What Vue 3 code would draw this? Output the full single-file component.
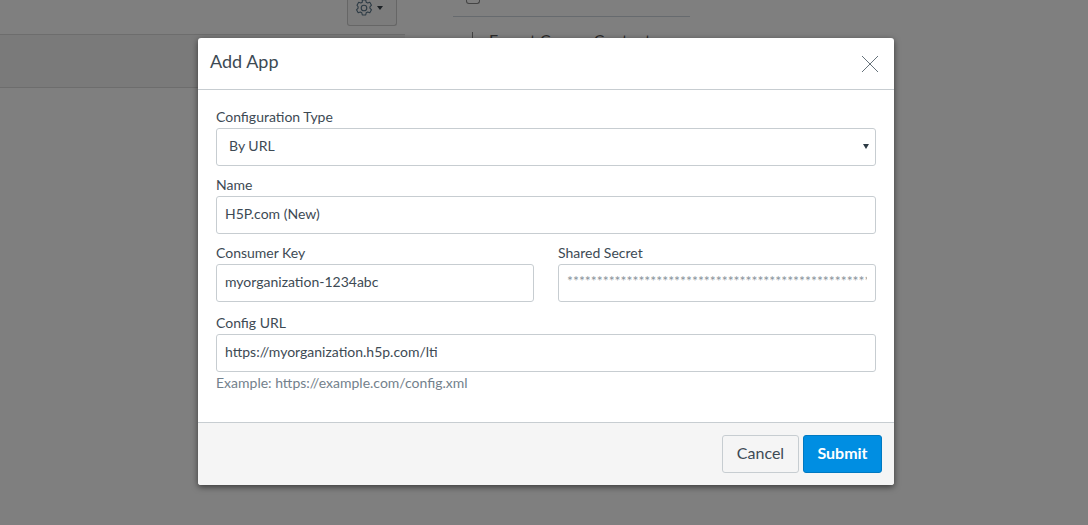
<script setup>
const secret = '*'.repeat(70)
</script>

<template>
  <div class="page">
    <div class="backdrop">
      <div class="left">
        <div class="toolbar">
          <button class="gear" type="button" aria-label="Settings">
            <svg width="18" height="18" viewBox="0 0 18 18" fill="none" stroke="#2d3b45" stroke-width="1.1" stroke-linejoin="round">
              <path d="M7.3 1h3.4l.5 2.2 1.5.8 2.1-.7 1.700 2.900-1.600 1.600v1.400l1.600 1.600-1.700 2.900-2.100-.7-1.500.8-.5 2.200H7.300l-.5-2.200-1.500-.8-2.100.7-1.700-2.900 1.600-1.600V7.800L2 6.200l1.700-2.900 2.100.7 1.500-.8z" />
              <circle cx="9" cy="9" r="2.800" />
            </svg>
            <span class="caret"></span>
          </button>
        </div>
        <div class="band"></div>
      </div>
      <div class="right">
        <div class="side-icon"></div>
        <div class="side-rule"></div>
        <div class="side-link"><span class="tick"></span>Export Course Content</div>
      </div>
    </div>

    <div class="overlay">
      <section class="modal">
        <header class="head">
          <h2>Add App</h2>
          <svg class="close" width="18" height="18" viewBox="0 0 18 18" stroke="#66727b" stroke-width="1" fill="none">
            <path d="M1 1l16 16M17 1L1 17" />
          </svg>
        </header>
        <form class="body">
          <label class="field">
            <span>Configuration Type</span>
            <div class="select">By URL<i class="arrow"></i></div>
          </label>
          <label class="field">
            <span>Name</span>
            <input value="H5P.com (New)" />
          </label>
          <div class="pair">
            <label class="field">
              <span>Consumer Key</span>
              <input value="myorganization-1234abc" />
            </label>
            <label class="field">
              <span>Shared Secret</span>
              <input class="secret" :value="secret" />
            </label>
          </div>
          <label class="field last">
            <span>Config URL</span>
            <input value="https://myorganization.h5p.com/lti" />
          </label>
          <p class="hint">Example: https://example.com/config.xml</p>
        </form>
        <footer class="foot">
          <button class="btn cancel" type="button">Cancel</button>
          <button class="btn primary" type="button">Submit</button>
        </footer>
      </section>
    </div>
  </div>
</template>

<style>
html, body { margin: 0; background: #7f7f7f; }
</style>

<style scoped>
.page {
  position: relative;
  width: 1088px;
  height: 525px;
  overflow: hidden;
  background: #7f7f7f;
  font-family: Lato, "Open Sans", sans-serif;
  font-size: 14px;
  color: #3d4a54;
}
.backdrop { display: flex; height: 100%; }
.left { width: 405px; flex: none; }
.toolbar {
  height: 34px;
  border-bottom: 1px solid #6d6d6d;
  display: flex;
  justify-content: flex-end;
  padding-right: 8px;
  box-sizing: content-box;
}
.gear {
  width: 50px;
  height: 26px;
  box-sizing: border-box;
  padding: 0 0 0 7px;
  background: #7c7c7c;
  border: 1px solid #666;
  border-top: 0;
  border-radius: 0 0 3px 3px;
  display: flex;
  align-items: flex-start;
  gap: 4px;
}
.gear svg { margin-top: -1px; flex: none; }
.caret {
  margin-top: 6px;
  border: 3.500px solid transparent;
  border-top: 4px solid #1d2226;
  border-bottom: 0;
}
.band { height: 52px; background: #7a7a7a; border-bottom: 1px solid #6d6d6d; }
.right { margin-left: 48px; width: 237px; }
.side-icon {
  width: 12px;
  height: 3px;
  margin-left: 13px;
  border: 1px solid #444;
  border-top: 0;
  border-radius: 0 0 3px 3px;
}
.side-rule { height: 1px; margin-top: 12px; background: #666a6e; }
.side-link {
  margin-top: 13px;
  padding-left: 36px;
  position: relative;
  font-size: 16px;
  line-height: 20px;
  color: #2a2a2a;
  white-space: nowrap;
}
.tick {
  position: absolute;
  left: 19px;
  top: 2px;
  width: 1px;
  height: 14px;
  background: #444;
}
.overlay {
  position: absolute;
  left: 198px;
  top: 38px;
}
.modal {
  width: 696px;
  height: 447px;
  display: flex;
  flex-direction: column;
  background: #fff;
  border-radius: 3px;
  overflow: hidden;
  box-shadow: 0 2px 6px rgba(0, 0, 0, 0.55);
}
.head {
  height: 51px;
  flex: none;
  box-sizing: content-box;
  border-bottom: 1px solid #c7cdd1;
  display: flex;
  align-items: center;
  justify-content: space-between;
  padding: 0 15px 0 12px;
}
.head h2 {
  margin: 0 0 6px;
  font-size: 18px;
  font-weight: 400;
  line-height: 46px;
  color: #3d4a54;
}
.close { display: block; }
.body {
  flex: 1;
  padding: 17px 18px 0;
  box-sizing: border-box;
  background: #fff;
}
.field { display: flex; flex-direction: column; margin-bottom: 9px; }
.field > span { line-height: 20px; height: 21px; }
.pair .field { margin-bottom: 11px; }
.field.last { margin-bottom: 0; }
.pair { display: grid; grid-template-columns: 318px 318px; gap: 24px; }
input, .select {
  box-sizing: border-box;
  width: 100%;
  height: 38px;
  padding: 0 8px 4px;
  font: inherit;
  color: #3d4a54;
  background: #fff;
  border: 1px solid #c7cdd1;
  border-radius: 3px;
  outline: none;
}
.select {
  position: relative;
  display: flex;
  align-items: center;
  padding-left: 12px;
}
.arrow {
  position: absolute;
  right: 6px;
  top: 15px;
  border: 3px solid transparent;
  border-top: 5px solid #2d3b45;
  border-bottom: 0;
}
.secret { color: #8a949b; padding-bottom: 6px; }
.hint {
  margin: 0;
  padding-top: 1px;
  line-height: 20px;
  font-size: 14px;
  color: #73818c;
}
.foot {
  height: 62px;
  flex: none;
  box-sizing: content-box;
  background: #f5f5f5;
  border-top: 1px solid #c7cdd1;
  display: flex;
  justify-content: flex-end;
  align-items: center;
  gap: 4px;
  padding-right: 12px;
}
.btn {
  height: 38px;
  box-sizing: border-box;
  padding: 0 0 3px;
  font: inherit;
  font-size: 16px;
  color: #3d4a54;
  background: #f5f5f5;
  border: 1px solid #c7cdd1;
  border-radius: 3px;
}
.cancel { width: 77px; }
.btn.primary {
  width: 79px;
  font-weight: 700;
  color: #fff;
  background: #008ee2;
  border-color: #0079c1;
}
</style>
